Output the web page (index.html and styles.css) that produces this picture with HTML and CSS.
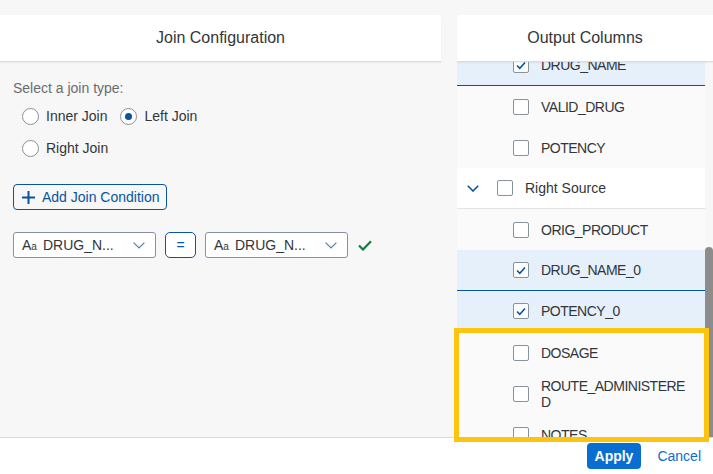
FILE: index.html
```html
<!DOCTYPE html>
<html lang="en">
<head>
<meta charset="utf-8">
<title>Join</title>
<link rel="stylesheet" href="styles.css">
</head>
<body>
<div class="page">
  <div class="main">
    <section class="panel panel-left">
      <header class="panel-head">Join Configuration</header>
      <div class="left-body">
        <div class="field-label">Select a join type:</div>
        <div class="radios">
          <div class="radio-row">
            <label class="radio"><span class="dot"></span>Inner Join</label>
            <label class="radio"><span class="dot dot-on"></span>Left Join</label>
          </div>
          <div class="radio-row">
            <label class="radio"><span class="dot"></span>Right Join</label>
          </div>
        </div>
        <button class="add-btn" type="button">
          <svg width="13" height="13" viewBox="0 0 13 13"><path d="M6.5 0v13M0 6.5h13" stroke="#0854a0" stroke-width="2" fill="none"/></svg>
          <span>Add Join Condition</span>
        </button>
        <div class="cond">
          <div class="select">
            <span class="aa">A<span class="aa-s">a</span></span>
            <span class="sel-val">DRUG_N...</span>
            <svg class="sel-chev" width="12" height="7" viewBox="0 0 12 7"><path d="M0.6 0.6 L6 6 L11.4 0.6" fill="none" stroke="#5b7fa5" stroke-width="1.2"/></svg>
          </div>
          <button class="eq" type="button">=</button>
          <div class="select">
            <span class="aa">A<span class="aa-s">a</span></span>
            <span class="sel-val">DRUG_N...</span>
            <svg class="sel-chev" width="12" height="7" viewBox="0 0 12 7"><path d="M0.6 0.6 L6 6 L11.4 0.6" fill="none" stroke="#5b7fa5" stroke-width="1.2"/></svg>
          </div>
          <svg class="ok" width="14" height="11" viewBox="0 0 14 11"><path d="M1 5.5 L5 9.5 L13 1.2" fill="none" stroke="#107e3e" stroke-width="2.2"/></svg>
        </div>
      </div>
    </section>
    <section class="panel panel-right">
      <header class="panel-head">Output Columns</header>
      <div class="list-wrap">
        <div class="list">
          <div class="list-inner">
            <div class="row item selected">
              <span class="cb cb-on"><svg width="10" height="9" viewBox="0 0 10 9"><path d="M1 4.5 L3.8 7.3 L9 1.5" fill="none" stroke="#0854a0" stroke-width="1.6"/></svg></span>
              <span class="name">DRUG_NAME</span>
            </div>
            <div class="row item"><span class="cb"></span><span class="name">VALID_DRUG</span></div>
            <div class="row item"><span class="cb"></span><span class="name">POTENCY</span></div>
            <div class="row group">
              <svg class="grp-chev" width="12" height="7" viewBox="0 0 12 7"><path d="M0.8 0.8 L6 6 L11.2 0.8" fill="none" stroke="#0854a0" stroke-width="1.6"/></svg>
              <span class="cb"></span><span class="grp-name">Right Source</span>
            </div>
            <div class="row item"><span class="cb"></span><span class="name">ORIG_PRODUCT</span></div>
            <div class="row item selected">
              <span class="cb cb-on"><svg width="10" height="9" viewBox="0 0 10 9"><path d="M1 4.5 L3.8 7.3 L9 1.5" fill="none" stroke="#0854a0" stroke-width="1.6"/></svg></span>
              <span class="name">DRUG_NAME_0</span>
            </div>
            <div class="row item selected">
              <span class="cb cb-on"><svg width="10" height="9" viewBox="0 0 10 9"><path d="M1 4.5 L3.8 7.3 L9 1.5" fill="none" stroke="#0854a0" stroke-width="1.6"/></svg></span>
              <span class="name">POTENCY_0</span>
            </div>
            <div class="row item"><span class="cb"></span><span class="name">DOSAGE</span></div>
            <div class="row item"><span class="cb"></span><span class="name">ROUTE_ADMINISTERED</span></div>
            <div class="row item"><span class="cb"></span><span class="name">NOTES</span></div>
          </div>
        </div>
        <div class="scroll"><div class="thumb"></div></div>
      </div>
    </section>
  </div>
  <footer class="foot">
    <button class="apply" type="button">Apply</button>
    <button class="cancel" type="button">Cancel</button>
  </footer>
  <div class="highlight"></div>
</div>
</body>
</html>
```
FILE: styles.css
```css
* { box-sizing: border-box; }
html, body { margin: 0; padding: 0; }
body {
  background: #f7f7f7;
  font-family: "Liberation Sans", Arial, sans-serif;
  font-size: 14px;
  color: #32363a;
}
button { font-family: inherit; cursor: pointer; }

.page {
  position: relative;
  width: 713px;
  height: 474px;
  display: flex;
  flex-direction: column;
  overflow: hidden;
}
.main {
  flex: 1;
  min-height: 0;
  display: flex;
  gap: 16px;
  padding-top: 15px;
}
.panel { display: flex; flex-direction: column; min-height: 0; }
.panel-left { width: 441px; flex-shrink: 0; }
.panel-right { flex: 1; min-width: 0; }

.panel-head {
  position: relative;
  z-index: 1;
  flex-shrink: 0;
  height: 46px;
  background: #fff;
  display: flex;
  align-items: center;
  justify-content: center;
  font-size: 16px;
  color: #32363a;
  box-shadow: 0 1px 0 #dcdcdc, 0 2px 2px rgba(0,0,0,0.06);
}
.panel-left .panel-head { border-top-right-radius: 4px; }
.panel-right .panel-head { border-top-left-radius: 4px; }

.left-body { padding: 19px 13px 0; }
.field-label { line-height: 16px; color: #6a6d70; }
.radios { margin-top: 4px; padding-left: 9px; }
.radio-row { height: 32px; display: flex; align-items: center; gap: 13px; }
.radio { display: flex; align-items: center; gap: 7px; color: #32363a; }
.dot {
  width: 17px; height: 17px;
  border: 1px solid #89919a;
  border-radius: 50%;
  background: #fff;
  display: grid;
  place-items: center;
}
.dot-on::after {
  content: "";
  width: 7px; height: 7px;
  border-radius: 50%;
  background: #0854a0;
}

.add-btn {
  margin-top: 20px;
  height: 26px;
  display: inline-flex;
  align-items: center;
  gap: 7px;
  padding: 0 6px 0 8px;
  border: 1px solid #0854a0;
  border-radius: 4px;
  background: transparent;
  color: #0854a0;
  font-size: 14px;
}

.cond { margin-top: 22px; display: flex; align-items: center; gap: 9px; }
.select {
  width: 143px; height: 26px;
  border: 1px solid #89919a;
  border-radius: 3px;
  background: #fff;
  display: flex;
  align-items: center;
  padding: 0 10px 0 8px;
}
.aa { font-size: 14px; color: #32363a; letter-spacing: 0; }
.aa-s { font-size: 10px; }
.sel-val { margin-left: 6px; flex: 1; }
.eq {
  width: 31px; height: 26px;
  border: 1px solid #0854a0;
  border-radius: 5px;
  background: #fff;
  color: #0854a0;
  font-size: 14px;
  padding: 0;
}
.ok { margin-left: 1px; }

.list-wrap { flex: 1; min-height: 0; display: flex; }
.list { flex: 1; min-width: 0; overflow: hidden; }
.list-inner { margin-top: -16px; }
.row {
  height: 41px;
  display: flex;
  align-items: center;
  background: #fafafa;
}
.item { padding: 0 14px 0 56px; }
.selected { background: #e5f0fa; border-bottom: 1px solid #0854a0; }
.group { background: #fff; padding-left: 10px; border-bottom: 1px solid #e5e5e5; }
.grp-chev { margin-right: 18px; }
.cb {
  width: 16px; height: 16px;
  flex-shrink: 0;
  border: 1px solid #89919a;
  border-radius: 2px;
  background: #fff;
  margin-right: 12px;
  display: grid;
  place-items: center;
}
.name { letter-spacing: -0.5px; line-height: 16px; word-break: break-all; }
.grp-name { color: #32363a; }

.scroll { width: 8px; flex-shrink: 0; display: flex; flex-direction: column; }
.thumb { margin-top: 186px; flex: 1; background: #8c8c8c; border-radius: 4px 4px 0 0; }

.foot {
  flex-shrink: 0;
  height: 37px;
  border-top: 1px solid #d9d9d9;
  background: #fff;
  display: flex;
  justify-content: flex-end;
  align-items: center;
  gap: 16px;
  padding-right: 12px;
}
.apply {
  height: 26px;
  padding: 0 8px;
  border: none;
  border-radius: 4px;
  background: #0a6ed1;
  color: #fff;
  font-weight: bold;
  font-size: 14px;
}
.cancel {
  border: none;
  background: transparent;
  color: #0a6ed1;
  font-size: 14px;
  padding: 0;
}

.highlight {
  position: absolute;
  left: 454px;
  top: 328px;
  width: 255px;
  height: 114px;
  border: 5px solid #fcc40f;
  pointer-events: none;
}
```
